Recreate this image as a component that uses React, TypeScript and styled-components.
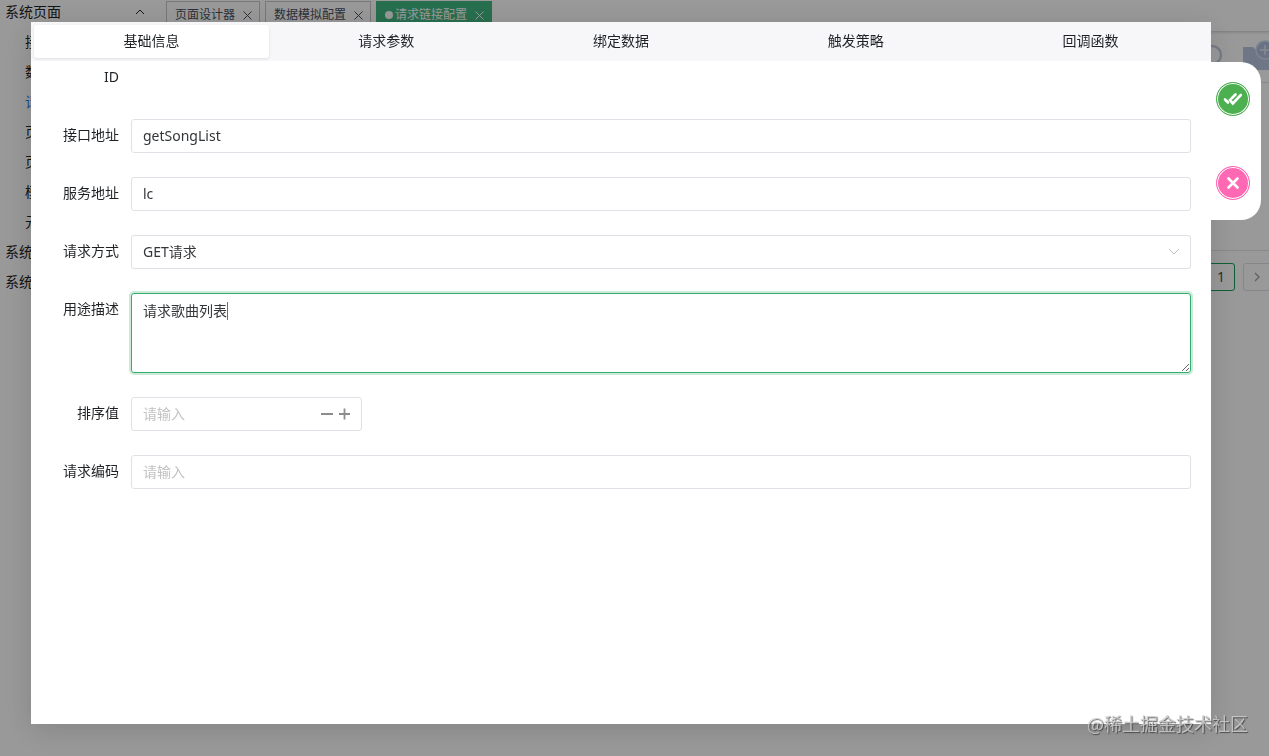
import React, { useState } from "react";
import styled, { createGlobalStyle } from "styled-components";

const GlobalStyle = createGlobalStyle`
  *, *::before, *::after { box-sizing: border-box; }
  body {
    margin: 0;
    background: #fff;
    color: #1f2225;
    font-family: "Noto Sans", "Noto Sans CJK SC", sans-serif;
    font-size: 14px;
    line-height: 20px;
  }
  button, input, select, textarea { font: inherit; color: inherit; }
`;

/* ---------- page behind the dialog ---------- */

const Page = styled.div`
  display: grid;
  grid-template-columns: 160px minmax(0, 1fr);
  height: 100vh;
  overflow: hidden;
`;

const Sidebar = styled.nav`
  display: flex;
  flex-direction: column;
  margin-top: -3px;
`;

const MenuLink = styled.a<{ $nested?: boolean; $active?: boolean }>`
  display: flex;
  align-items: center;
  justify-content: space-between;
  height: 30px;
  padding: 0 14px 0 ${(p) => (p.$nested ? 25 : 5)}px;
  color: ${(p) => (p.$active ? "#2080f0" : "#1f2225")};
  text-decoration: none;
  white-space: nowrap;
`;

const Main = styled.main`
  display: flex;
  flex-direction: column;
  min-width: 0;
  overflow: hidden;
`;

const PageTabs = styled.div`
  display: flex;
  gap: 5px;
  height: 32px;
  padding: 1px 6px 4px;
  border-bottom: 1px solid #dcdce0;
  box-shadow: 0 1px 2px rgba(0, 0, 0, 0.12);
`;

const PageTab = styled.button<{ $active?: boolean }>`
  display: flex;
  align-items: center;
  height: 27px;
  padding: 1px 7px 0 8px;
  border: 1px solid ${(p) => (p.$active ? "#42b983" : "#c8c8cc")};
  background: ${(p) => (p.$active ? "#42b983" : "#fff")};
  color: ${(p) => (p.$active ? "#fff" : "#495060")};
  font-size: 12px;
  white-space: nowrap;
  svg { margin-left: 8px; }
`;

const TabDot = styled.span`
  width: 8px;
  height: 8px;
  margin-right: 2px;
  border-radius: 50%;
  background: #fff;
`;

const Toolbar = styled.div`
  display: flex;
  justify-content: flex-end;
  align-items: center;
  gap: 18px;
  height: 50px;
  margin-right: -8px;
`;

const TableArea = styled.section`
  height: 169px;
  border: solid #e4e4e8;
  border-width: 1px 0;
`;

const Pagination = styled.div`
  display: flex;
  justify-content: flex-end;
  gap: 8px;
  padding-top: 12px;
  margin-right: -2px;
`;

const PageButton = styled.button<{ $active?: boolean }>`
  display: grid;
  place-items: center;
  width: 28px;
  height: 28px;
  padding: 0;
  border: 1px solid ${(p) => (p.$active ? "#18a058" : "#e0e0e6")};
  border-radius: 3px;
  background: #fff;
  color: #4c4c54;
`;

/* ---------- dialog ---------- */

const Overlay = styled.div`
  position: fixed;
  inset: 0;
  display: flex;
  padding: 22px 58px 32px 31px;
  background: rgba(0, 0, 0, 0.4);
`;

const Dialog = styled.section`
  position: relative;
  flex: 1;
  min-width: 0;
  background: #fff;
  box-shadow: 0 6px 30px rgba(0, 0, 0, 0.14);
`;

const TabList = styled.div`
  display: grid;
  grid-template-columns: repeat(5, 1fr);
  height: 39px;
  padding: 3px;
  background: #f7f7fa;
`;

const Tab = styled.button<{ $active: boolean }>`
  border: 0;
  border-radius: 3px;
  padding: 0 0 2px;
  background: ${(p) => (p.$active ? "#fff" : "transparent")};
  box-shadow: ${(p) => (p.$active ? "0 1px 3px rgba(0, 0, 0, 0.1)" : "none")};
  cursor: pointer;
`;

const Form = styled.form`
  display: flex;
  flex-direction: column;
  gap: 24px;
  padding-right: 20px;
`;

const Row = styled.div`
  display: grid;
  grid-template-columns: 88px minmax(0, 1fr);
  column-gap: 12px;
  min-height: 34px;
`;

const Label = styled.label`
  padding-top: 6px;
  text-align: right;
`;

const FieldBox = styled.div<{ $narrow?: boolean }>`
  position: relative;
  display: flex;
  align-items: center;
  width: ${(p) => (p.$narrow ? "231px" : "100%")};
  min-height: 34px;
  border: 1px solid #e0e0e6;
  border-radius: 3px;
`;

const ActiveFieldBox = styled(FieldBox)`
  border-color: #36ad6a;
  box-shadow: 0 0 0 2px rgba(24, 160, 88, 0.22);
`;

const TextInput = styled.input`
  flex: 1;
  min-width: 0;
  height: 32px;
  padding: 0 11px 2px;
  border: 0;
  outline: 0;
  background: transparent;
  color: #333639;
  &::placeholder { color: #c2c2c2; opacity: 1; }
`;

const Select = styled.select`
  flex: 1;
  height: 32px;
  padding: 0 11px;
  border: 0;
  outline: 0;
  appearance: none;
  background: transparent;
  color: #333639;
`;

const SelectArrow = styled.svg`
  margin-right: 10px;
  pointer-events: none;
`;

const TextArea = styled.textarea`
  display: block;
  flex: 1;
  height: 78px;
  padding: 7px 11px;
  border: 0;
  outline: 0;
  resize: vertical;
  background: transparent;
  color: #333639;
`;

const Caret = styled.span`
  position: absolute;
  left: 95px;
  top: 8px;
  width: 1px;
  height: 18px;
  background: #18a058;
`;

const Steppers = styled.div`
  display: flex;
  gap: 4px;
  padding-right: 9px;
`;

const StepButton = styled.button`
  display: grid;
  place-items: center;
  width: 14px;
  height: 20px;
  padding: 0;
  border: 0;
  background: transparent;
`;

const SidePanel = styled.div`
  position: absolute;
  top: 40px;
  left: 100%;
  display: flex;
  flex-direction: column;
  align-items: center;
  justify-content: space-between;
  width: 50px;
  height: 158px;
  padding: 20px 6px 20px 0;
  border-radius: 0 20px 20px 0;
  background: #fff;
`;

const RoundButton = styled.button<{ $color: string }>`
  display: grid;
  place-items: center;
  width: 34px;
  height: 34px;
  padding: 0;
  border: 1px solid ${(p) => p.$color};
  border-radius: 50%;
  background: ${(p) => p.$color};
  box-shadow: inset 0 0 0 1px #fff;
  cursor: pointer;
`;

const Watermark = styled.div`
  position: fixed;
  right: 21px;
  bottom: 21px;
  color: rgba(205, 205, 205, 0.85);
  font-family: "Noto Sans CJK SC", sans-serif;
  font-size: 18px;
  line-height: 24px;
  text-shadow: 1px 1px 1px rgba(50, 50, 50, 0.75);
`;

/* ---------- data ---------- */

const subMenu = ["接口", "数据", "请求", "页面", "页签", "模板", "元素"];
const dialogTabs = ["基础信息", "请求参数", "绑定数据", "触发策略", "回调函数"];
const pageTabs = ["页面设计器", "数据模拟配置", "请求链接配置"];

const Cross = () => (
  <svg width="9" height="9" viewBox="0 0 9 9" fill="none" stroke="currentColor">
    <path d="M.5 .5l8 8M8.500 .5l-8 8" />
  </svg>
);

export default function App() {
  const [tab, setTab] = useState(0);
  return (
    <>
      <GlobalStyle />
      <Page>
        <Sidebar>
          <MenuLink href="#system">
            系统页面
            <svg width="12" height="8" viewBox="0 0 12 8" fill="none" stroke="currentColor">
              <path d="M2 6l4-4 4 4" />
            </svg>
          </MenuLink>
          {subMenu.map((item, i) => (
            <MenuLink key={item} href="#page" $nested $active={i === 2}>{item}</MenuLink>
          ))}
          <MenuLink href="#settings">系统设置</MenuLink>
          <MenuLink href="#monitor">系统监控</MenuLink>
        </Sidebar>
        <Main>
          <PageTabs>
            {pageTabs.map((name, i) => (
              <PageTab key={name} $active={i === 2}>
                {i === 2 && <TabDot />}
                {name}
                <Cross />
              </PageTab>
            ))}
          </PageTabs>
          <Toolbar>
            <svg width="26" height="28" viewBox="0 0 26 28" fill="none" stroke="#c6d0e4" strokeWidth="2.500">
              <circle cx="13" cy="12" r="9" />
              <path d="M18 19l5 5" />
            </svg>
            <svg width="34" height="34" viewBox="0 0 34 34">
              <path d="M0 7h10l3 3h21v20H0z" fill="#b9c7e0" />
              <circle cx="22" cy="10" r="9" fill="#b0c0de" stroke="#d2dcee" strokeWidth="1.500" />
              <path d="M22 5v10M17 10h10" stroke="#dfe6f2" strokeWidth="1.500" />
            </svg>
          </Toolbar>
          <TableArea />
          <Pagination>
            <PageButton $active>1</PageButton>
            <PageButton aria-label="下一页">
              <svg width="8" height="12" viewBox="0 0 8 12" fill="none" stroke="#a0a0a8" strokeWidth="1.300">
                <path d="M2 2l4 4-4 4" />
              </svg>
            </PageButton>
          </Pagination>
        </Main>
      </Page>

      <Overlay>
        <Dialog role="dialog" aria-modal="true">
          <TabList role="tablist">
            {dialogTabs.map((name, i) => (
              <Tab key={name} role="tab" aria-selected={tab === i} $active={tab === i} onClick={() => setTab(i)}>
                {name}
              </Tab>
            ))}
          </TabList>
          <Form>
            <Row>
              <Label as="span">ID</Label>
            </Row>
            <Row>
              <Label htmlFor="api">接口地址</Label>
              <FieldBox><TextInput id="api" defaultValue="getSongList" /></FieldBox>
            </Row>
            <Row>
              <Label htmlFor="service">服务地址</Label>
              <FieldBox><TextInput id="service" defaultValue="lc" /></FieldBox>
            </Row>
            <Row>
              <Label htmlFor="method">请求方式</Label>
              <FieldBox>
                <Select id="method" defaultValue="GET">
                  <option value="GET">GET请求</option>
                  <option value="POST">POST请求</option>
                </Select>
                <SelectArrow width="12" height="8" viewBox="0 0 12 8" fill="none" stroke="#c2c2c2">
                  <path d="M1 1l5 5 5-5" />
                </SelectArrow>
              </FieldBox>
            </Row>
            <Row>
              <Label htmlFor="usage">用途描述</Label>
              <ActiveFieldBox>
                <TextArea id="usage" defaultValue="请求歌曲列表" />
                <Caret />
              </ActiveFieldBox>
            </Row>
            <Row>
              <Label htmlFor="order">排序值</Label>
              <FieldBox $narrow>
                <TextInput id="order" inputMode="numeric" placeholder="请输入" />
                <Steppers>
                  <StepButton type="button" aria-label="减少">
                    <svg width="12" height="12" viewBox="0 0 12 12" stroke="#8c8c8c" strokeWidth="2">
                      <path d="M0 6h12" />
                    </svg>
                  </StepButton>
                  <StepButton type="button" aria-label="增加">
                    <svg width="12" height="12" viewBox="0 0 12 12" stroke="#8c8c8c" strokeWidth="1.800">
                      <path d="M0 6h11M5.500 .5v11" />
                    </svg>
                  </StepButton>
                </Steppers>
              </FieldBox>
            </Row>
            <Row>
              <Label htmlFor="code">请求编码</Label>
              <FieldBox><TextInput id="code" placeholder="请输入" /></FieldBox>
            </Row>
          </Form>
          <SidePanel>
            <RoundButton $color="#4caf50" aria-label="确定">
              <svg width="20" height="14" viewBox="0 0 20 14" fill="none" stroke="#fff" strokeWidth="2.600" strokeLinecap="round">
                <path d="M2 7.500l3 3M8.500 6.500l4-4M6.800 8l3 3.500 8-8.500" />
              </svg>
            </RoundButton>
            <RoundButton $color="#ff69b4" aria-label="取消">
              <svg width="14" height="14" viewBox="0 0 14 14" fill="none" stroke="#fff" strokeWidth="2.600" strokeLinecap="round">
                <path d="M2.500 2.500l9 9M11.500 2.500l-9 9" />
              </svg>
            </RoundButton>
          </SidePanel>
        </Dialog>
      </Overlay>
      <Watermark>@稀土掘金技术社区</Watermark>
    </>
  );
}
